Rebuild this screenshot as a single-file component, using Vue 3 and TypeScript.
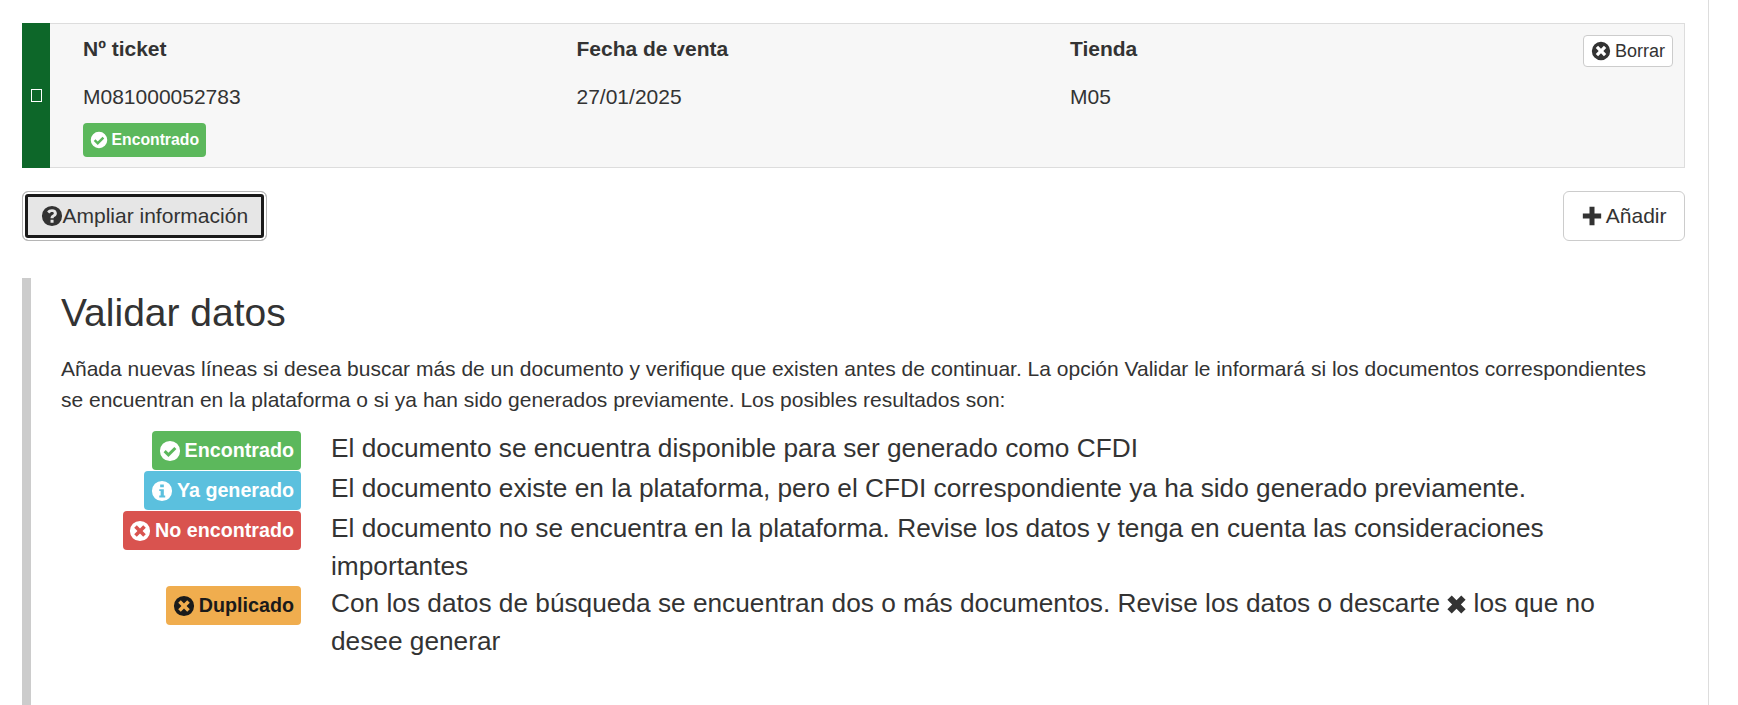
<script setup lang="ts">
const circle = 'M12 1a11 11 0 1 0 0 22a11 11 0 1 0 0-22z'
const icons: Record<string, string> = {
  ok: circle + 'M10.3 18.6L5 13.3l2.3-2.3l3 3l6.4-6.4L19 9.9z',
  info: circle + 'M10 5h4v3h-4zM9 10h5v7h1.5v2h-6.5v-2h1.5v-5h-1.5z',
  remove: circle + 'M8.5 5.7L12 9.2l3.5-3.5l2.8 2.8L14.8 12l3.5 3.5l-2.8 2.8L12 14.8l-3.5 3.5l-2.8-2.8L9.2 12L5.7 8.5z',
  question: circle + 'M12 4.5c3.2 0 5.3 1.8 5.3 4.4c0 2-1.1 3-2.4 3.8c-.9.6-1.2.9-1.2 1.8h-3.3c0-2 .7-2.9 2-3.7c1-.6 1.6-1 1.6-1.8s-.8-1.4-2-1.4c-1.300 0-2.200.600-3 1.700L6.700 7.100C7.900 5.400 9.700 4.500 12 4.500zM10.400 16h3.300v3.300h-3.300z'
}

const legend = [
  { label: 'Encontrado', icon: 'ok', tone: 'success', text: 'El documento se encuentra disponible para ser generado como CFDI' },
  { label: 'Ya generado', icon: 'info', tone: 'info', text: 'El documento existe en la plataforma, pero el CFDI correspondiente ya ha sido generado previamente.' },
  { label: 'No encontrado', icon: 'remove', tone: 'danger', text: 'El documento no se encuentra en la plataforma. Revise los datos y tenga en cuenta las consideraciones importantes' }
]
</script>

<template>
  <div class="page">
    <main class="content">
      <section class="ticket">
        <div class="ticket-side"><input type="checkbox" class="check" /></div>
        <div class="ticket-body">
          <div class="col">
            <h4>Nº ticket</h4>
            <p>M081000052783</p>
            <span class="badge small success">
              <svg viewBox="0 0 24 24" class="ico"><path :d="icons.ok" fill-rule="evenodd" /></svg>Encontrado
            </span>
          </div>
          <div class="col">
            <h4>Fecha de venta</h4>
            <p>27/01/2025</p>
          </div>
          <div class="col">
            <h4>Tienda</h4>
            <p>M05</p>
          </div>
          <button class="btn-delete">
            <svg viewBox="0 0 24 24" class="ico"><path :d="icons.remove" fill-rule="evenodd" /></svg>Borrar
          </button>
        </div>
      </section>

      <div class="actions">
        <button class="btn focused">
          <svg viewBox="0 0 24 24" class="ico-btn"><path :d="icons.question" fill-rule="evenodd" /></svg>Ampliar información
        </button>
        <button class="btn">
          <svg viewBox="0 0 24 24" class="ico-plus"><path d="M9 1h6v8h8v6h-8v8H9v-8H1V9h8z" /></svg>Añadir
        </button>
      </div>

      <blockquote class="help">
        <h2>Validar datos</h2>
        <p class="intro">
          Añada nuevas líneas si desea buscar más de un documento y verifique que existen antes de continuar. La opción Validar le informará si los documentos correspondientes se encuentran en la plataforma o si ya han sido generados previamente. Los posibles resultados son:
        </p>
        <dl class="legend">
          <template v-for="item in legend" :key="item.label">
            <dt>
              <span class="badge" :class="item.tone">
                <svg viewBox="0 0 24 24" class="ico"><path :d="icons[item.icon]" fill-rule="evenodd" /></svg>{{ item.label }}
              </span>
            </dt>
            <dd>{{ item.text }}</dd>
          </template>
          <dt>
            <span class="badge warning">
              <svg viewBox="0 0 24 24" class="ico"><path :d="icons.remove" fill-rule="evenodd" /></svg>Duplicado
            </span>
          </dt>
          <dd>
            Con los datos de búsqueda se encuentran dos o más documentos. Revise los datos o descarte
            <svg viewBox="0 0 24 24" class="ico-x"><path d="M6 0.500L12 6.500L18 0.500L23.500 6L17.500 12L23.500 18L18 23.500L12 17.500L6 23.500L0.500 18L6.500 12L0.500 6z" /></svg>
            los que no desee generar
          </dd>
        </dl>
      </blockquote>
    </main>
  </div>
</template>

<style scoped>
.page {
  height: 705px;
  overflow: hidden;
  box-sizing: border-box;
  width: 1709px;
  border-right: 1px solid #ddd;
  padding: 23px 23px 0 22px;
  font-family: "Liberation Sans", Arial, sans-serif;
  color: #333;
  font-size: 21px;
}

.ticket {
  display: flex;
  height: 145px;
  box-sizing: border-box;
  background: #f7f7f7;
  border: 1px solid #ddd;
  border-left: none;
}

.ticket-side {
  width: 28px;
  margin-top: -1px;
  margin-bottom: -1px;
  background: #0d6729;
  display: flex;
  align-items: center;
  justify-content: center;
}

.check {
  appearance: none;
  width: 11px;
  height: 13px;
  margin: 0;
  border: 1px solid #fff;
  background: transparent;
}

.ticket-body {
  flex: 1;
  display: flex;
  position: relative;
  padding-left: 33px;
}

.col {
  width: 493.500px;
  padding-top: 13px;
}

.col h4 {
  margin: 0;
  font-size: 21px;
  line-height: 24px;
  font-weight: bold;
}

.col p {
  margin: 24px 0 0;
  font-size: 21px;
  line-height: 24px;
}

.btn-delete {
  position: absolute;
  right: 11px;
  top: 11px;
  height: 32px;
  width: 90px;
  padding: 0;
  display: flex;
  align-items: center;
  justify-content: center;
  background: #fff;
  border: 1px solid #ccc;
  border-radius: 4px;
  color: #333;
  font: 18px "Liberation Sans", Arial, sans-serif;
}

.btn-delete .ico {
  width: 20px;
  height: 20px;
  margin-right: 4px;
  fill: #333;
}

.actions {
  display: flex;
  justify-content: space-between;
  margin-top: 23px;
}

.btn {
  height: 50px;
  padding: 0 17.500px;
  display: flex;
  align-items: center;
  background: #fff;
  border: 1px solid #ccc;
  border-radius: 6px;
  color: #333;
  font: 21px "Liberation Sans", Arial, sans-serif;
}

.btn.focused {
  background: #e6e6e6;
  border-color: #b5b5b5;
  box-shadow: inset 0 0 0 2px #fff, inset 0 0 0 5px #1a1a1a;
}

.ico-btn {
  width: 22px;
  height: 22px;
  fill: #333;
}

.ico-plus {
  width: 20px;
  height: 20px;
  margin-right: 4px;
  fill: #333;
}

.help {
  margin: 37px 0 0;
  border-left: 9px solid #ccc;
  padding: 13px 30px 0 30px;
  height: 460px;
}

.help h2 {
  margin: 0;
  font-size: 39px;
  font-weight: normal;
  line-height: 43px;
}

.intro {
  margin: 19px 0 0;
  font-size: 21px;
  line-height: 31px;
}

.legend {
  display: grid;
  grid-template-columns: 240px 1fr;
  column-gap: 30px;
  margin: 15px 0 0;
  font-size: 26.250px;
  line-height: 37.500px;
}

.legend dt {
  text-align: right;
  line-height: 0;
  padding-top: 1px;
}

.legend dd {
  margin: 0;
  min-height: 40px;
}

.badge {
  display: inline-flex;
  align-items: center;
  height: 39px;
  padding: 0 7px 0 6.500px;
  box-sizing: border-box;
  border-radius: 4px;
  color: #fff;
  fill: #fff;
  font-size: 19.700px;
  font-weight: bold;
  line-height: 1;
}

.badge .ico {
  width: 22px;
  height: 22px;
  margin-right: 4px;
}

.badge.small {
  height: 34px;
  margin-top: 14px;
  font-size: 15.750px;
}

.badge.small .ico {
  width: 18px;
  height: 18px;
  margin-right: 4px;
}

.success { background: #5cb85c; }
.info { background: #5bc0de; }
.danger { background: #d9534f; }
.warning { background: #f0ad4e; color: #1a1a1a; fill: #1a1a1a; }

.ico-x {
  width: 19px;
  height: 19px;
  vertical-align: -2px;
  fill: #333;
}
</style>
